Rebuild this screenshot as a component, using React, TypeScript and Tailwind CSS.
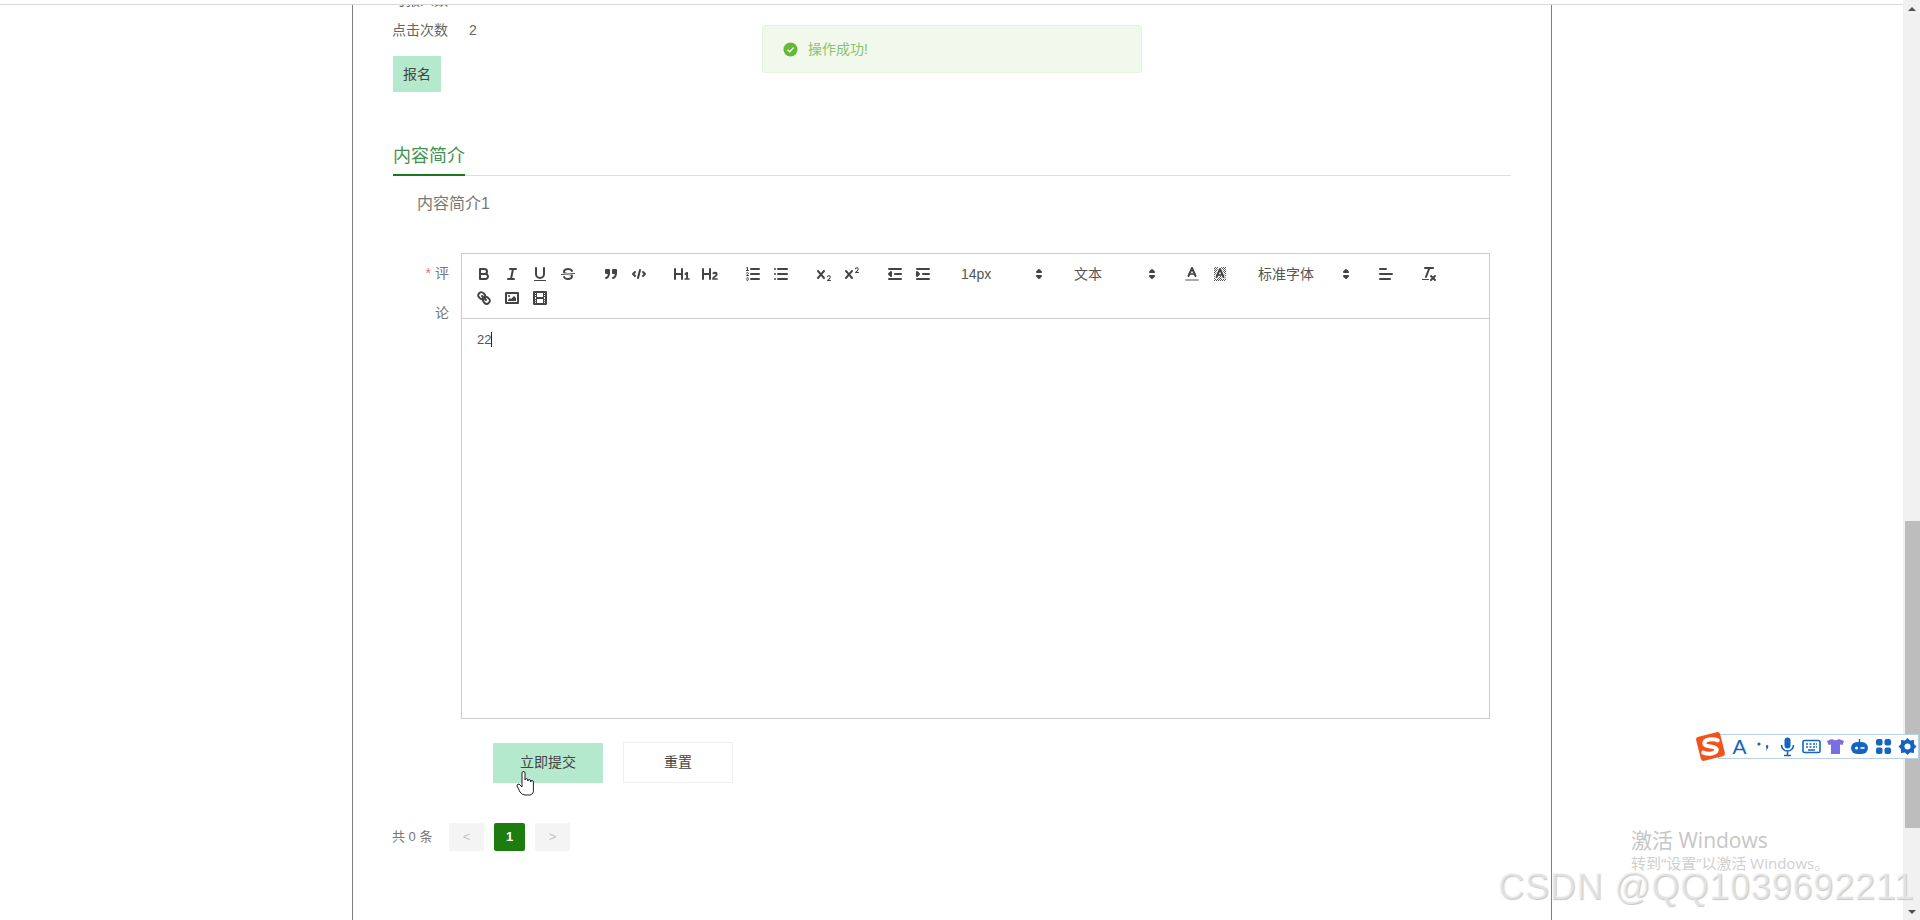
import * as React from 'react';

const ink = "#444";

function Ico({ children }: { children: React.ReactNode }) {
  return (
    <button className="w-[28px] h-[24px] px-[5px] py-[3px] shrink-0">
      <svg viewBox="0 0 18 18" className="w-[18px] h-[18px]" fill="none" stroke={ink} strokeWidth={2} strokeLinecap="round" strokeLinejoin="round">
        {children}
      </svg>
    </button>
  );
}

function Picker({ label, width }: { label: string; width: string }) {
  return (
    <div className={`${width} h-[24px] shrink-0 mr-[15px] flex items-center justify-between pl-[9px] pr-[2px] text-[14px] text-[#555]`}>
      <span>{label}</span>
      <svg viewBox="0 0 18 18" className="w-[18px] h-[18px]" fill={ink} stroke={ink} strokeWidth={2} strokeLinejoin="round">
        <polygon points="7 11 9 13 11 11 7 11" />
        <polygon points="7 7 9 5 11 7 7 7" />
      </svg>
    </div>
  );
}

function Group({ children }: { children: React.ReactNode }) {
  return <div className="flex mr-[15px]">{children}</div>;
}

function Toolbar() {
  return (
    <div className="flex flex-wrap p-[8px] border-b border-[#ccc]">
      <Group>
        <Ico>
          <path d="M5,4H9.5A2.5,2.5,0,0,1,12,6.5v0A2.5,2.5,0,0,1,9.5,9H5A0,0,0,0,1,5,9V4A0,0,0,0,1,5,4Z" />
          <path d="M5,9h5.5A2.5,2.5,0,0,1,13,11.5v0A2.5,2.5,0,0,1,10.5,14H5a0,0,0,0,1,0,0V9A0,0,0,0,1,5,9Z" />
        </Ico>
        <Ico>
          <line x1="7" x2="13" y1="4" y2="4" />
          <line x1="5" x2="11" y1="14" y2="14" />
          <line x1="8" x2="10" y1="14" y2="4" />
        </Ico>
        <Ico>
          <path d="M5,3V9a4.012,4.012,0,0,0,4,4H9a4.012,4.012,0,0,0,4-4V3" />
          <rect fill={ink} stroke="none" height="1" rx=".5" ry=".5" width="12" x="3" y="15" />
        </Ico>
        <Ico>
          <line strokeWidth={1} x1="15.5" x2="2.5" y1="8.5" y2="9.5" />
          <path fill={ink} stroke="none" d="M9.007,8C6.542,7.791,6,7.519,6,6.5,6,5.792,7.283,5,9,5c1.571,0,2.765.679,2.969,1.309a1,1,0,0,0,1.9-.617C13.356,4.106,11.354,3,9,3,6.2,3,4,4.538,4,6.5a3.2,3.2,0,0,0,.5,1.843Z" />
          <path fill={ink} stroke="none" d="M8.984,10C11.457,10.208,12,10.479,12,11.5c0,.708-1.283,1.5-3,1.5-1.571,0-2.765-.679-2.969-1.309a1,1,0,1,0-1.9.617C4.644,13.894,6.646,15,9,15c2.8,0,5-1.538,5-3.5a3.2,3.2,0,0,0-.5-1.843Z" />
        </Ico>
      </Group>
      <Group>
        <Ico>
          <rect fill={ink} height="3" width="3" x="4" y="5" />
          <rect fill={ink} height="3" width="3" x="11" y="5" />
          <path d="M7,8c0,4.031-3,5-3,5" />
          <path d="M14,8c0,4.031-3,5-3,5" />
        </Ico>
        <Ico>
          <polyline points="5 7 3 9 5 11" />
          <polyline points="13 7 15 9 13 11" />
          <line x1="10" x2="8" y1="5" y2="13" />
        </Ico>
      </Group>
      <Group>
        <Ico>
          <path fill={ink} stroke="none" d="M10,4V14a1,1,0,0,1-2,0V10H3v4a1,1,0,0,1-2,0V4A1,1,0,0,1,3,4V8H8V4a1,1,0,0,1,2,0Zm6.06787,9.209H14.98975V7.59863a.54085.54085,0,0,0-.605-.60547h-.62744a1.01119,1.01119,0,0,0-.748.29688L11.645,8.56641a.5435.5435,0,0,0-.022.8584l.28613.30762a.53861.53861,0,0,0,.84717.0332l.09912-.08789a1.2137,1.2137,0,0,0,.2417-.35254h.02246s-.01123.30859-.01123.60547V13.209H12.041a.54085.54085,0,0,0-.605.60547v.43945a.54085.54085,0,0,0,.605.60547h4.02686a.54085.54085,0,0,0,.605-.60547v-.43945A.54085.54085,0,0,0,16.06787,13.209Z" />
        </Ico>
        <Ico>
          <path fill={ink} stroke="none" d="M16.73975,13.81445v.43945a.54085.54085,0,0,1-.605.60547H11.855a.58392.58392,0,0,1-.64893-.60547V14.0127c0-2.90527,3.39941-3.42187,3.39941-4.55469a.77675.77675,0,0,0-.84717-.78125,1.17684,1.17684,0,0,0-.83594.38477c-.2749.26367-.561.374-.85791.13184l-.4292-.34082c-.30811-.24219-.38525-.51758-.1543-.81445a2.97155,2.97155,0,0,1,2.45361-1.17676,2.45393,2.45393,0,0,1,2.68408,2.40918c0,2.45312-3.1792,2.92676-3.27832,3.93848h2.79443A.54085.54085,0,0,1,16.73975,13.81445ZM9,3A.99974.99974,0,0,0,8,4V8H3V4A1,1,0,0,0,1,4V14a1,1,0,0,0,2,0V10H8v4a1,1,0,0,0,2,0V4A.99974.99974,0,0,0,9,3Z" />
        </Ico>
      </Group>
      <Group>
        <Ico>
          <line x1="7" x2="15" y1="4" y2="4" />
          <line x1="7" x2="15" y1="9" y2="9" />
          <line x1="7" x2="15" y1="14" y2="14" />
          <line strokeWidth={1} x1="2.5" x2="4.5" y1="5.5" y2="5.5" />
          <path fill={ink} stroke="none" d="M3.5,6A0.5,0.5,0,0,1,3,5.5V3.085l-0.276.138A0.5,0.5,0,0,1,2.053,3c-0.124-.247-0.023-0.324.224-0.447l1-.5A0.5,0.5,0,0,1,4,2.5v3A0.5,0.5,0,0,1,3.5,6Z" />
          <path strokeWidth={1} d="M4.5,10.5h-2c0-.234,1.85-1.076,1.85-2.234A0.959,0.959,0,0,0,2.5,8.156" />
          <path strokeWidth={1} d="M2.5,14.846a0.959,0.959,0,0,0,1.85-.109A0.7,0.7,0,0,0,3.75,14a0.688,0.688,0,0,0,.6-0.736,0.959,0.959,0,0,0-1.85-.109" />
        </Ico>
        <Ico>
          <line x1="6" x2="15" y1="4" y2="4" />
          <line x1="6" x2="15" y1="9" y2="9" />
          <line x1="6" x2="15" y1="14" y2="14" />
          <line x1="3" x2="3" y1="4" y2="4" />
          <line x1="3" x2="3" y1="9" y2="9" />
          <line x1="3" x2="3" y1="14" y2="14" />
        </Ico>
      </Group>
      <Group>
        <Ico>
          <path fill={ink} stroke="none" d="M15.5,15H13.861a3.858,3.858,0,0,0,1.914-2.975,1.8,1.8,0,0,0-1.6-1.751A1.921,1.921,0,0,0,12.021,11.7a0.50013,0.50013,0,1,0,.957.291h0a0.914,0.914,0,0,1,1.053-.725,0.81,0.81,0,0,1,.744.762c0,1.076-1.16971,1.86982-1.93971,2.43082A1.45639,1.45639,0,0,0,12,15.5a0.5,0.5,0,0,0,.5.5h3A0.5,0.5,0,0,0,15.5,15Z" />
          <path fill={ink} stroke="none" d="M9.65,5.241a1,1,0,0,0-1.409.108L6,7.964,3.759,5.349A1,1,0,0,0,2.192,6.59178Q2.2,6.6,2.241,6.651L4.684,9.5,2.241,12.35A1,1,0,0,0,3.71,13.70722q0.02-.02.03-0.03l2.25-2.622,2.241,2.622a1,1,0,0,0,1.567-1.24277L9.759,12.35,7.316,9.5,9.759,6.651A1,1,0,0,0,9.65,5.241Z" />
        </Ico>
        <Ico>
          <path fill={ink} stroke="none" d="M15.5,7H13.861a4.015,4.015,0,0,0,1.914-2.975,1.8,1.8,0,0,0-1.6-1.751A1.922,1.922,0,0,0,12.021,3.7a0.5,0.5,0,1,0,.957.291,0.917,0.917,0,0,1,1.053-.725,0.81,0.81,0,0,1,.744.762c0,1.077-1.164,1.925-1.934,2.486A1.423,1.423,0,0,0,12,7.5a0.5,0.5,0,0,0,.5.5h3A0.5,0.5,0,0,0,15.5,7Z" />
          <path fill={ink} stroke="none" d="M9.651,5.241a1,1,0,0,0-1.41.108L6,7.964,3.759,5.349a1,1,0,1,0-1.519,1.3L4.683,9.5,2.241,12.35a1,1,0,1,0,1.519,1.3L6,11.036l2.241,2.616a1,1,0,0,0,1.519-1.3L7.317,9.5,9.759,6.651A1,1,0,0,0,9.651,5.241Z" />
        </Ico>
      </Group>
      <Group>
        <Ico>
          <line x1="3" x2="15" y1="14" y2="14" />
          <line x1="3" x2="15" y1="4" y2="4" />
          <line x1="9" x2="15" y1="9" y2="9" />
          <polyline fill={ink} points="5 7 5 11 3 9 5 7" />
        </Ico>
        <Ico>
          <line x1="3" x2="15" y1="14" y2="14" />
          <line x1="3" x2="15" y1="4" y2="4" />
          <line x1="9" x2="15" y1="9" y2="9" />
          <polyline fill={ink} points="3 7 3 11 5 9 3 7" />
        </Ico>
      </Group>
      <Picker label="14px" width="w-[98px]" />
      <Picker label="文本" width="w-[98px]" />
      <Group>
        <Ico>
          <line stroke="#aaa" x1="3" x2="15" y1="15" y2="15" />
          <polyline points="5.5 11 9 3 12.5 11" />
          <line strokeWidth={1.5} x1="11.63" x2="6.38" y1="9" y2="9" />
        </Ico>
        <Ico>
          <defs>
            <pattern id="hatch" width="2" height="2" patternUnits="userSpaceOnUse">
              <rect width="1" height="1" fill="#555" stroke="none" />
              <rect x="1" y="1" width="1" height="1" fill="#555" stroke="none" />
            </pattern>
          </defs>
          <rect x="3" y="2" width="12" height="14" fill="url(#hatch)" stroke="none" />
          <polyline stroke="#fff" strokeWidth={4} points="5.5 12 9 4 12.5 12" />
          <polyline points="5.5 12 9 4 12.5 12" />
          <line strokeWidth={1.5} x1="11.63" x2="6.38" y1="10" y2="10" />
        </Ico>
      </Group>
      <Picker label="标准字体" width="w-[108px]" />
      <Group>
        <Ico>
          <line x1="3" x2="15" y1="9" y2="9" />
          <line x1="3" x2="13" y1="14" y2="14" />
          <line x1="3" x2="9" y1="4" y2="4" />
        </Ico>
      </Group>
      <Group>
        <Ico>
          <line x1="5" x2="13" y1="3" y2="3" />
          <line x1="6" x2="9.35" y1="12" y2="3" />
          <line x1="11" x2="15" y1="11" y2="15" />
          <line x1="15" x2="11" y1="11" y2="15" />
          <rect fill={ink} stroke="none" height="1" rx=".5" ry=".5" width="7" x="2" y="14" />
        </Ico>
      </Group>
      <Group>
        <Ico>
          <line x1="7" x2="11" y1="7" y2="11" />
          <path d="M8.9,4.577a3.476,3.476,0,0,1,.36,4.679A3.476,3.476,0,0,1,4.577,8.9C3.185,7.5,2.035,6.4,4.217,4.217S7.5,3.185,8.9,4.577Z" />
          <path d="M13.423,9.1a3.476,3.476,0,0,0-4.679-.36,3.476,3.476,0,0,0,.36,4.679c1.392,1.392,2.5,2.542,4.679.36S14.815,10.5,13.423,9.1Z" />
        </Ico>
        <Ico>
          <rect height="10" width="12" x="3" y="4" />
          <circle fill={ink} stroke="none" cx="6" cy="7" r="1" />
          <polyline fill={ink} stroke="none" points="5 12 5 11 7 9 8 10 11 7 13 9 13 12 5 12" />
        </Ico>
        <Ico>
          <rect height="12" width="12" x="3" y="3" />
          <rect fill={ink} stroke="none" height="12" width="1" x="5" y="3" />
          <rect fill={ink} stroke="none" height="12" width="1" x="12" y="3" />
          <rect fill={ink} stroke="none" height="2" width="8" x="5" y="8" />
          <rect fill={ink} stroke="none" height="1" width="3" x="3" y="5" />
          <rect fill={ink} stroke="none" height="1" width="3" x="3" y="7" />
          <rect fill={ink} stroke="none" height="1" width="3" x="3" y="10" />
          <rect fill={ink} stroke="none" height="1" width="3" x="3" y="12" />
          <rect fill={ink} stroke="none" height="1" width="3" x="12" y="5" />
          <rect fill={ink} stroke="none" height="1" width="3" x="12" y="7" />
          <rect fill={ink} stroke="none" height="1" width="3" x="12" y="10" />
          <rect fill={ink} stroke="none" height="1" width="3" x="12" y="12" />
        </Ico>
      </Group>
    </div>
  );
}

function ImeBar() {
  const blue = "#1565c0";
  return (
    <div className="absolute left-[1694px] top-[730px] flex items-center">
      <svg viewBox="0 0 32 32" className="w-[33px] h-[33px] relative z-10">
        <rect x="4" y="4" width="24" height="24" rx="3" fill="#f0531c" transform="rotate(-14 16 16)" />
        <path d="M23 10 C18 8 10 9 10 13 C10 17 22 15 22 19 C22 23 14 24 9 22" fill="none" stroke="#fff" strokeWidth="4" strokeLinecap="round" />
      </svg>
      <div className="-ml-[9px] w-[201px] h-[25px] bg-white border border-[#b9cfe4] flex items-center pl-[10px] gap-[3px]">
        <span className="w-[21px] text-center text-[21px] leading-none text-[#1565c0] font-['Liberation_Sans',sans-serif]">A</span>
        <svg viewBox="0 0 21 21" className="w-[21px] h-[21px]"><circle cx="6" cy="8" r="1.6" fill={blue} /><path d="M14 9 q2 0 1 3 l-2 3 q1 -3 0 -4 q-.5 -2 1 -2z" fill={blue} /></svg>
        <svg viewBox="0 0 21 21" className="w-[21px] h-[21px]"><rect x="7.5" y="1.5" width="6" height="11" rx="3" fill={blue} /><path d="M4.5 9 a6 6 0 0 0 12 0 M10.5 15 v4 M7 19.5 h7" fill="none" stroke={blue} strokeWidth="1.6" /></svg>
        <svg viewBox="0 0 21 21" className="w-[21px] h-[21px]"><rect x="2" y="4.5" width="17" height="12" rx="1.5" fill="none" stroke={blue} strokeWidth="1.6" /><path d="M5 8h2M8.5 8h2M12 8h2M15 8h1M5 11h2M8.5 11h2M12 11h2M15 11h1M7 14h7" stroke={blue} strokeWidth="1.6" /></svg>
        <svg viewBox="0 0 21 21" className="w-[21px] h-[21px]"><path d="M7 3 L2 5 L3.5 9 L6 8.5 V18 H15 V8.5 L17.5 9 L19 5 L14 3 Q10.5 5.5 7 3Z" fill="#7a6fe0" /></svg>
        <svg viewBox="0 0 21 21" className="w-[21px] h-[21px]"><rect x="2" y="6" width="17" height="12" rx="6" fill={blue} /><path d="M10.5 6 V3" stroke={blue} strokeWidth="1.5" /><circle cx="7.5" cy="12" r="1.5" fill="#fff" /><path d="M11.5 12h4" stroke="#fff" strokeWidth="1.6" /></svg>
        <svg viewBox="0 0 21 21" className="w-[21px] h-[21px]"><rect x="3" y="3" width="6.5" height="6.5" rx="2" fill={blue} /><rect x="11.5" y="3" width="6.5" height="6.5" rx="2" fill={blue} /><rect x="3" y="11.5" width="6.5" height="6.5" rx="2" fill={blue} /><rect x="11.5" y="11.5" width="6.5" height="6.5" rx="2" fill={blue} /></svg>
        <svg viewBox="0 0 21 21" className="w-[21px] h-[21px]"><path d="M10.5 2 L13 4.5 L17 4 L17 8 L19.5 10.5 L17 13 L17 17 L13 16.5 L10.5 19 L8 16.5 L4 17 L4 13 L1.5 10.5 L4 8 L4 4 L8 4.5Z" fill={blue} /><circle cx="10.5" cy="10.5" r="3" fill="#fff" /></svg>
      </div>
    </div>
  );
}

export default function App() {
  return (
    <div className="relative h-[920px] w-[1920px] overflow-hidden flex bg-white font-['Liberation_Sans','Noto_Sans_CJK_SC',sans-serif]">
      <div className="flex-1 flex flex-col min-w-0">
        <div className="h-[5px] shrink-0 border-b border-[#d9d9d9] bg-white relative z-10"></div>
        <div className="flex-1 overflow-hidden">
          <div className="ml-[352px] w-[1200px] h-[935px] border-x border-[#808080] pl-[39px] pr-[40px] -mt-[20px]">
            <div className="flex h-[30px] items-center text-[14px] text-[#666]"><span className="w-[77px]">可报人数</span><span>1</span></div>
            <div className="flex h-[30px] items-center text-[14px] text-[#666]"><span className="w-[77px]">点击次数</span><span>2</span></div>
            <button className="mt-[11px] ml-px block w-[48px] h-[36px] bg-[#b5e9cd] text-[14px] text-[#444]">报名</button>

            <div className="mt-[47px] ml-px h-[37px] border-b border-[#dcdfe6]">
              <div className="w-[72px] h-[37px] border-b-2 border-[#177a1f] text-[18px] leading-[34px] text-[#3f9350]">内容简介</div>
            </div>
            <div className="mt-[16px] pl-[25px] text-[16px] leading-[24px] text-[#777]">内容简介1</div>

            <div className="mt-[37px] flex">
              <div className="w-[57px] shrink-0 text-right text-[14px] leading-[40px] text-[#777]">
                <span className="text-[#f56c6c] mr-[4px]">*</span>评<br />论
              </div>
              <div className="ml-[12px] w-[1029px] h-[466px] border border-[#ccc] flex flex-col">
                <Toolbar />
                <div className="flex-1 px-[15px] py-[12px] text-[13px] leading-[18.46px] text-[#555]">
                  22<span className="inline-block w-px h-[15px] bg-[#222] align-[-3px]"></span>
                </div>
              </div>
            </div>

            <div className="mt-[23px] ml-[101px] flex gap-[20px] items-center">
              <button className="w-[110px] h-[40px] bg-[#b5e9cd] text-[14px] text-[#444]">立即提交</button>
              <button className="w-[110px] h-[41px] bg-white border border-[#eeeeee] text-[14px] text-[#444]">重置</button>
            </div>

            <div className="mt-[40px] flex items-center text-[13px] text-[#777]">
              <span className="w-[57px]">共 0 条</span>
              <button className="w-[35px] h-[28px] bg-[#f4f4f5] text-[#c0c4cc]">&lt;</button>
              <button className="ml-[10px] w-[31px] h-[28px] rounded-[2px] bg-[#1c7c0e] text-white font-bold">1</button>
              <button className="ml-[10px] w-[35px] h-[28px] bg-[#f4f4f5] text-[#c0c4cc]">&gt;</button>
            </div>
          </div>
        </div>
      </div>

      <div className="w-[17px] shrink-0 bg-[#f1f1f1] flex flex-col items-center border-l border-[#eee]">
        <div className="h-[17px] w-full flex items-center justify-center">
          <div className="w-0 h-0 border-x-[4px] border-x-transparent border-b-[4px] border-b-[#505050]"></div>
        </div>
        <div className="mt-[504px] w-[15px] h-[307px] bg-[#bdbdbd]"></div>
        <div className="mt-auto h-[17px] w-full flex items-center justify-center">
          <div className="w-0 h-0 border-x-[4px] border-x-transparent border-t-[4px] border-t-[#505050]"></div>
        </div>
      </div>

      {/* success toast */}
      <div className="absolute left-[762px] top-[25px] w-[380px] h-[48px] bg-[#f0f9eb] border border-[#e9f3e2] rounded-[2px] flex items-center pl-[20px] gap-[10px] text-[14px] text-[#8cc16f]">
        <svg viewBox="0 0 16 16" className="w-[15px] h-[15px]">
          <circle cx="8" cy="8" r="7.5" fill="#67b83a" />
          <path d="M4.8 8.2 L7.2 10.4 L11.2 6" fill="none" stroke="#fff" strokeWidth="1.4" />
        </svg>
        <span>操作成功!</span>
      </div>

      {/* hand cursor */}
      <svg viewBox="0 0 20 26" className="absolute left-[516px] top-[770px] w-[20px] h-[26px]" fill="#fff" stroke="#222" strokeWidth="1" strokeLinejoin="round">
        <path d="M6 13 V3 a1.5 1.5 0 0 1 3 0 V10 a1.4 1.4 0 0 1 2.8 0 V11 a1.4 1.4 0 0 1 2.8 0 V12 a1.4 1.4 0 0 1 2.8 0 V19 Q18 24 14 25 H9 Q6 25 4 22 L1 16 Q1 14 3 14 L6 17 Z" />
      </svg>

      <ImeBar />

      {/* desktop overlays */}
      <div className="absolute left-[1631px] top-[827px] text-[21px] leading-[26px] text-[#c6c6c6] font-['Open_Sans','Noto_Sans_CJK_SC',sans-serif]">激活 Windows</div>
      <div className="absolute left-[1631px] top-[854px] text-[15px] leading-[18px] text-[#cfcfcf] font-['Open_Sans','Noto_Sans_CJK_SC',sans-serif]">转到“设置”以激活 Windows。</div>
      <div className="absolute left-[1498px] top-[866px] text-[36px] leading-[42px] tracking-[0.8px] whitespace-nowrap text-[#f2f2f2]/60 [text-shadow:1px_1px_1px_#c8c8c8]">CSDN @QQ1039692211</div>
    </div>
  );
}
